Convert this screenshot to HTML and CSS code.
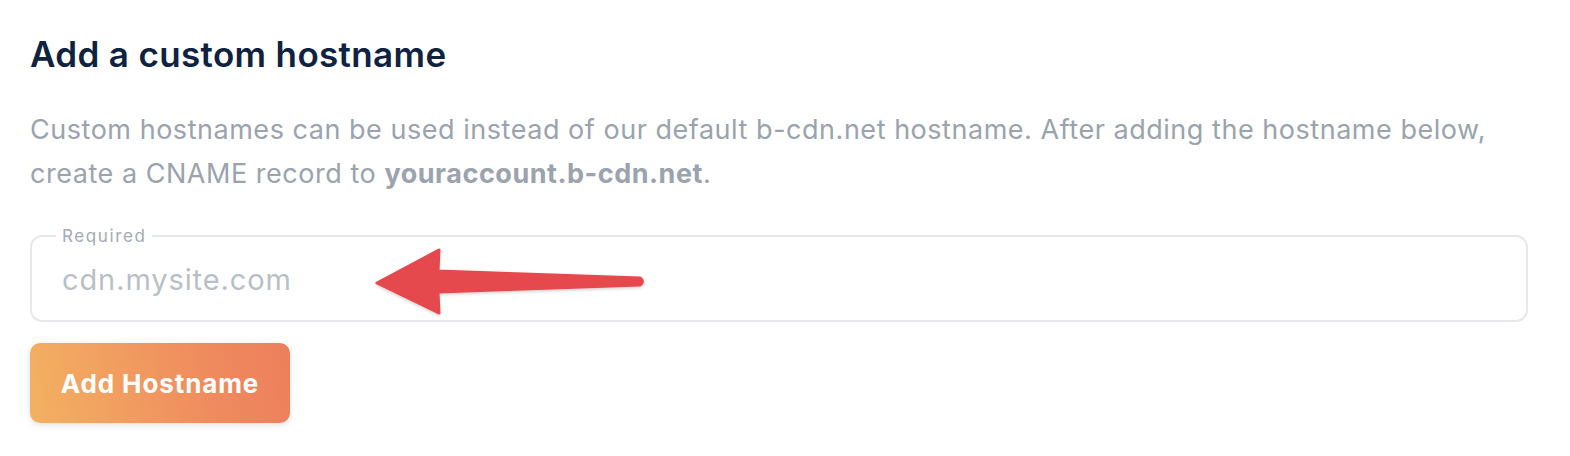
FILE: index.html
```html
<!DOCTYPE html>
<html lang="en">
<head>
    <meta charset="UTF-8">
    <meta name="viewport" content="width=device-width, initial-scale=1.0">
    <title>Add a custom hostname</title>
    <link rel="stylesheet" href="styles.css">
</head>
<body>

    <div class="hostname-panel">
        <h2 class="panel-title">Add a custom hostname</h2>

        <p class="panel-text">
            Custom hostnames can be used instead of our default b-cdn.net hostname. After adding the hostname below,
            <br>create a CNAME record to <strong>youraccount.b-cdn.net</strong>.
        </p>

        <form class="hostname-form">
            <fieldset class="field">
                <legend class="field-label">Required</legend>
                <input type="text" class="field-input" placeholder="cdn.mysite.com">

                <!-- annotation arrow pointing at the input -->
                <svg class="arrow" width="700" height="100" viewBox="0 0 700 100">
                    <defs>
                        <filter id="arrowShadow" x="-10%" y="-30%" width="120%" height="160%">
                            <feDropShadow dx="0" dy="1.5" stdDeviation="1.5" flood-color="#000" flood-opacity="0.18"/>
                        </filter>
                    </defs>
                    <path filter="url(#arrowShadow)" fill="#e5484d" stroke="#e5484d" stroke-width="3" stroke-linejoin="round"
                          d="M344 48 L406 15 L405 36 L607 43 Q612 46.5 607 50 L405 57 L406 78 Z"/>
                </svg>
            </fieldset>

            <button type="submit" class="submit-button">Add Hostname</button>
        </form>
    </div>

</body>
</html>
```

FILE: styles.css
```css
body {
    margin: 0;
    font-family: Inter, "Noto Sans", sans-serif;
    background-color: #fff;
}

.hostname-panel {
    padding: 30px 42px 30px 30px;
}

.panel-title {
    margin: 0;
    font-size: 35px;
    font-weight: 600;
    letter-spacing: 0.35px;
    line-height: 48px;
    color: #0f2240;
}

.panel-text {
    margin: 30px 0 0;
    font-size: 27px;
    letter-spacing: 0.53px;
    line-height: 44px;
    color: #9aa3ae;
}

.panel-text strong {
    font-weight: 700;
}

.hostname-form {
    margin-top: 34px;
}

.field {
    position: relative;
    margin: 0;
    padding: 0 30px;
    height: 92px;
    box-sizing: border-box;
    border: 2px solid #e7e8ec;
    border-radius: 12px;
}

.field-label {
    margin-left: -6px;
    padding: 0 6px;
    font-size: 17px;
    letter-spacing: 1.6px;
    line-height: 12px;
    color: #a3aab4;
}

.field-input {
    display: block;
    width: 100%;
    margin-top: 20px;
    padding: 0;
    border: none;
    outline: none;
    font-family: inherit;
    font-size: 29px;
    letter-spacing: 0.9px;
    line-height: 36px;
    color: #374151;
    background: transparent;
}

.field-input::placeholder {
    color: #b9bfc7;
}

.arrow {
    position: absolute;
    left: 1px;
    top: -7px;
    pointer-events: none;
}

.submit-button {
    display: block;
    margin-top: 21px;
    width: 260px;
    height: 80px;
    border: none;
    border-radius: 10px;
    background: linear-gradient(80deg, #f3b162 0%, #ef8a5e 70%, #ed7f5c 100%);
    box-shadow: 0 2px 6px rgba(0, 0, 0, 0.12);
    font-family: inherit;
    font-size: 26px;
    font-weight: 700;
    letter-spacing: 0.9px;
    color: #fff;
    cursor: pointer;
}
```
